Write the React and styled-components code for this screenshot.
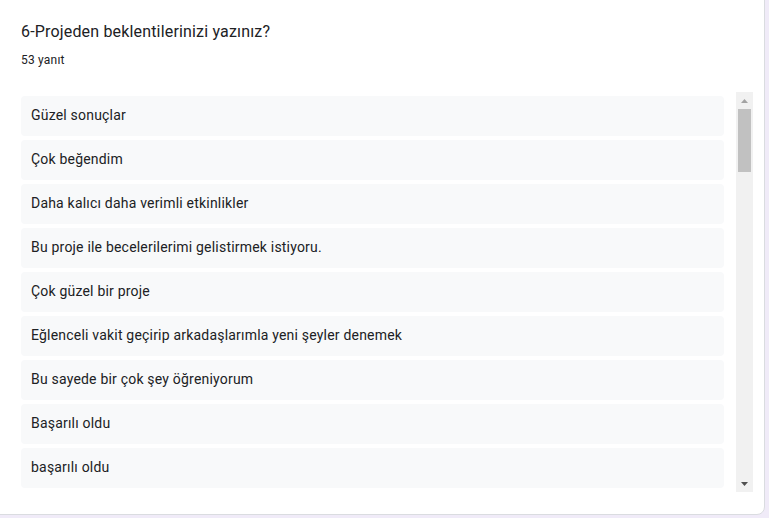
import React from "react";
import styled, { createGlobalStyle } from "styled-components";

const GlobalStyle = createGlobalStyle`
  html, body { margin: 0; padding: 0; }
  body {
    background: #f0ebf8;
    font-family: Roboto, "Liberation Sans", Arial, sans-serif;
    overflow: hidden;
  }
  * { box-sizing: border-box; }
`;

const Page = styled.div`
  width: 769px;
  height: 518px;
  overflow: hidden;
  background: #f0ebf8;
`;

const Card = styled.section`
  width: 775px;
  margin: -10px 0 0 -10px;
  padding: 29px 11px 22px 30px;
  background: #fff;
  border: 1px solid #dadce0;
  border-radius: 8px;
`;

const Title = styled.h2`
  margin: 0;
  font-family: Roboto, "Liberation Sans", Arial, sans-serif;
  font-weight: 400;
  font-size: 16px;
  line-height: 24px;
  letter-spacing: 0.17px;
  color: #202124;
`;

const Count = styled.div`
  margin-top: 8px;
  font-size: 12px;
  line-height: 16px;
  letter-spacing: 0.2px;
  color: #202124;
`;

const ListArea = styled.div`
  margin-top: 24px;
  height: 400px;
  display: flex;
`;

const Responses = styled.ul`
  list-style: none;
  margin: 0 12px 0 0;
  padding: 4px 0;
  flex: 1;
  overflow: hidden;
  display: flex;
  flex-direction: column;
  gap: 4px;
`;

const Response = styled.li`
  flex: none;
  height: 40px;
  padding: 9px 10px 11px;
  background: #f8f9fa;
  border-radius: 4px;
  font-size: 14px;
  line-height: 20px;
  letter-spacing: 0.2px;
  color: #202124;
  white-space: nowrap;
`;

const Track = styled.div`
  position: relative;
  width: 17px;
  flex: none;
  background: #f1f1f1;
  display: flex;
  flex-direction: column;
  justify-content: space-between;
`;

const ArrowButton = styled.div`
  height: 17px;
  display: flex;
  align-items: center;
  justify-content: center;
  color: ${(p) => (p.$disabled ? "#a3a3a3" : "#505050")};
`;

const Thumb = styled.div`
  position: absolute;
  left: 2px;
  right: 2px;
  background: #c1c1c1;
`;

const Arrow = ({ down }) => (
  <svg width="7" height="4" viewBox="0 0 7 4" style={{ display: "block" }}>
    <polygon points={down ? "0,0 7,0 3.5,4" : "0,4 7,4 3.5,0"} fill="currentColor" />
  </svg>
);

const answers = [
  "Güzel sonuçlar",
  "Çok beğendim",
  "Daha kalıcı daha verimli etkinlikler",
  "Bu proje ile becelerilerimi gelistirmek istiyoru.",
  "Çok güzel bir proje",
  "Eğlenceli vakit geçirip arkadaşlarımla yeni şeyler denemek",
  "Bu sayede bir çok şey öğreniyorum",
  "Başarılı oldu",
  "başarılı oldu",
];

const TOTAL = 53;
const VIEW = 400;
const BTN = 17;

export default function App() {
  const contentHeight = TOTAL * 44 + 4;
  const trackLen = VIEW - BTN * 2;
  const thumbH = Math.round((VIEW / contentHeight) * trackLen);
  return (
    <Page>
      <GlobalStyle />
      <Card>
        <Title>6-Projeden beklentilerinizi yazınız?</Title>
        <Count>{TOTAL} yanıt</Count>
        <ListArea>
          <Responses>
            {answers.map((a, i) => (
              <Response key={i}>{a}</Response>
            ))}
          </Responses>
          <Track>
            <ArrowButton $disabled>
              <Arrow />
            </ArrowButton>
            <Thumb style={{ top: BTN, height: thumbH }} />
            <ArrowButton>
              <Arrow down />
            </ArrowButton>
          </Track>
        </ListArea>
      </Card>
    </Page>
  );
}
